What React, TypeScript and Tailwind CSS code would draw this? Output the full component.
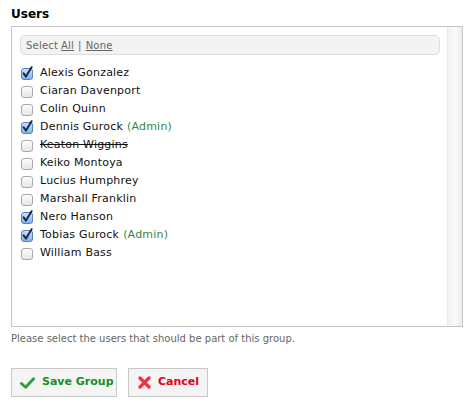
import React from "react";

const users: { name: string; checked: boolean; admin?: boolean; disabled?: boolean }[] = [
  { name: "Alexis Gonzalez", checked: true },
  { name: "Ciaran Davenport", checked: false },
  { name: "Colin Quinn", checked: false },
  { name: "Dennis Gurock", checked: true, admin: true },
  { name: "Keaton Wiggins", checked: false, disabled: true },
  { name: "Keiko Montoya", checked: false },
  { name: "Lucius Humphrey", checked: false },
  { name: "Marshall Franklin", checked: false },
  { name: "Nero Hanson", checked: true },
  { name: "Tobias Gurock", checked: true, admin: true },
  { name: "William Bass", checked: false },
];

function Box({ checked }: { checked: boolean }) {
  return (
    <svg width="14" height="14" viewBox="0 0 14 14" className="shrink-0">
      <defs>
        <linearGradient id="ub" x1="0" y1="0" x2="0" y2="1">
          <stop offset="0" stopColor="#ffffff" />
          <stop offset="1" stopColor="#e4e4e4" />
        </linearGradient>
        <linearGradient id="cb" x1="0" y1="0" x2="0" y2="1">
          <stop offset="0" stopColor="#cfe3fb" />
          <stop offset="1" stopColor="#7fb2ee" />
        </linearGradient>
      </defs>
      <rect
        x="1.5"
        y="2.5"
        width="11"
        height="11"
        rx="2.5"
        fill={checked ? "url(#cb)" : "url(#ub)"}
        stroke={checked ? "#5a80b8" : "#a9a9a9"}
        strokeWidth="1"
      />
      {checked && (
        <path d="M3.6 7.4 L6 10.6 L11.6 1.2" fill="none" stroke="#1b2a4a" strokeWidth="2" strokeLinecap="round" strokeLinejoin="round" />
      )}
    </svg>
  );
}

export default function App() {
  return (
    <div className="w-[475px] h-[405px] bg-white pt-[7px] pl-[11px]" style={{ fontFamily: "'DejaVu Sans', Verdana, sans-serif" }}>
      <div className="text-[12px] font-bold text-black leading-[15px]">Users</div>
      <div className="mt-[4px] w-[452px] h-[301px] border border-[#c4c4c4] flex">
        <div className="flex-1 pl-[8px] pr-[7px] pt-[8px]">
          <div className="h-[20px] rounded-[5px] border border-[#dedede] bg-[#f3f3f3] flex items-center pl-[5px] text-[10px] tracking-[0.2px] text-[#666]">
            <span>Select</span>
            <span className="ml-[3px] underline">All</span>
            <span className="mx-[4px]">|</span>
            <span className="underline">None</span>
          </div>
          <div className="mt-[9px] flex flex-col">
            {users.map((u) => (
              <div key={u.name} className="h-[18px] flex items-center gap-[6px] text-[11px] tracking-[0.2px] text-[#111] whitespace-nowrap">
                <Box checked={u.checked} />
                <span className={u.disabled ? "line-through" : ""}>{u.name}</span>
                {u.admin && <span className="text-[#2f8a4a] -ml-[2px]">(Admin)</span>}
              </div>
            ))}
          </div>
        </div>
        <div className="w-[15px] border-l border-[#e8e8e8] bg-gradient-to-r from-[#f0f0f0] via-[#fafafa] to-[#ececec]" />
      </div>
      <div className="mt-[4px] text-[10px] text-[#666] whitespace-nowrap">Please select the users that should be part of this group.</div>
      <div className="mt-[22px] flex gap-[11px]">
        <button className="w-[106px] h-[29px] border border-[#c8c8c8] bg-[#f4f4f4] flex items-center pl-[8px] gap-[7px] text-[11px] font-bold text-[#17901f] whitespace-nowrap">
          <svg width="15" height="14" viewBox="0 0 16 14" className="shrink-0">
            <path d="M1.5 7.5 L6 11.5 L14.5 2.5" fill="none" stroke="#27a03a" strokeWidth="3" strokeLinecap="round" strokeLinejoin="round" />
          </svg>
          Save Group
        </button>
        <button className="w-[80px] h-[29px] border border-[#c8c8c8] bg-[#f4f4f4] flex items-center pl-[9px] gap-[7px] text-[11px] font-bold text-[#e3001b] whitespace-nowrap">
          <svg width="13" height="13" viewBox="0 0 13 13" className="shrink-0">
            <path d="M2 2 L11 11 M11 2 L2 11" fill="none" stroke="#ee3344" strokeWidth="3.2" strokeLinecap="round" />
          </svg>
          Cancel
        </button>
      </div>
    </div>
  );
}
